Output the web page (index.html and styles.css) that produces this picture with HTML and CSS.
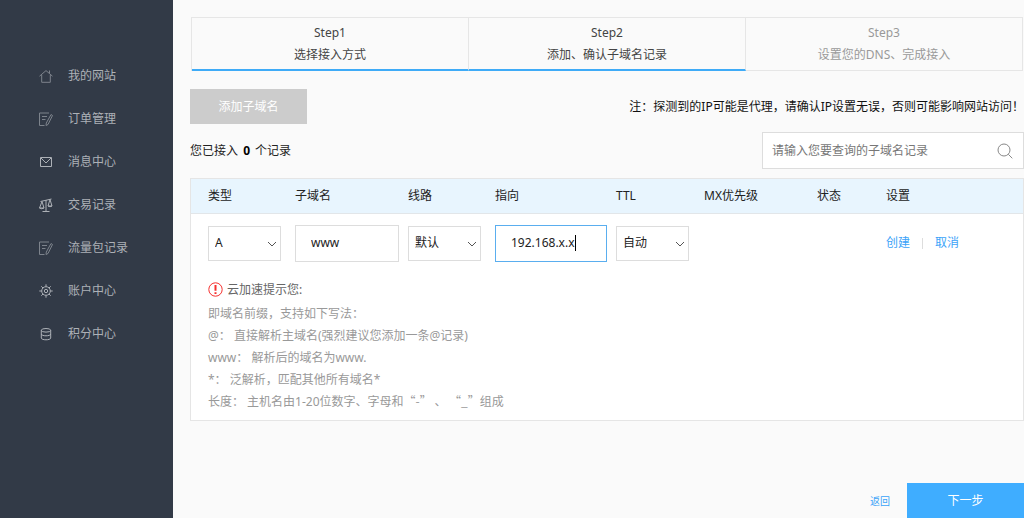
FILE: index.html
```html
<!DOCTYPE html>
<html lang="zh-CN">
<head>
<meta charset="utf-8">
<title>添加、确认子域名记录</title>
<link rel="stylesheet" href="styles.css">
</head>
<body>
<div class="app">
  <nav class="sidebar">
    <a class="nav-item" href="#"><svg class="nav-icon dim" viewBox="0 0 14 14"><path d="M.5 7.200 7 1.600l6.500 5.600M2.700 6v7.300h8.600V6M10.500 4V1.500"/></svg>我的网站</a>
    <a class="nav-item" href="#"><svg class="nav-icon dim" viewBox="0 0 14 14"><path d="M10 1H.5v12.500h5M3 4.500h5M3 7.500h3.500M12 2.500l1.500 1-4.500 9-2 1 .3-2.500z"/></svg>订单管理</a>
    <a class="nav-item" href="#"><svg class="nav-icon" viewBox="0 0 14 14"><path d="M1.500 2.500h11v9h-11zM2 3l5 5 5-5"/></svg>消息中心</a>
    <a class="nav-item" href="#"><svg class="nav-icon" viewBox="0 0 14 14"><path d="M1.500 3.500 12.500 1M7 2v11.500M3.500 13.500h7M3 3.500.5 10h4.500zM11 1.500 9 8h4zM.5 10q2.200 1.500 4.500 0M9 8q2 1.500 4 0"/></svg>交易记录</a>
    <a class="nav-item" href="#"><svg class="nav-icon dim" viewBox="0 0 14 14"><path d="M10 1H.5v12.500h5M3 4.500h5M3 7.500h3.500M12 2.500l1.500 1-4.500 9-2 1 .3-2.500z"/></svg>流量包记录</a>
    <a class="nav-item" href="#"><svg class="nav-icon" viewBox="0 0 14 14"><circle cx="7" cy="7" r="4.300"/><circle cx="7" cy="7" r="1.700"/><path d="M7 .3v2.400M7 11.300v2.400M.3 7h2.400M11.300 7h2.400M2.300 2.300 4 4M10 10l1.700 1.700M11.700 2.300 10 4M4 10l-1.700 1.700"/></svg>账户中心</a>
    <a class="nav-item" href="#"><svg class="nav-icon" viewBox="0 0 14 14"><ellipse cx="7" cy="3.300" rx="4.700" ry="1.800"/><path d="M2.300 3.300v7.700c0 2.400 9.400 2.400 9.400 0V3.300M2.300 7c0 2.400 9.400 2.400 9.400 0"/></svg>积分中心</a>
  </nav>

  <main class="main">
    <ol class="steps">
      <li class="step done"><span>Step1</span><span>选择接入方式</span></li>
      <li class="step done"><span>Step2</span><span>添加、确认子域名记录</span></li>
      <li class="step"><span>Step3</span><span>设置您的DNS、完成接入</span></li>
    </ol>

    <div class="bar">
      <button class="btn-add" type="button" disabled>添加子域名</button>
      <p class="note">注：探测到的IP可能是代理，请确认IP设置无误，否则可能影响网站访问！</p>
    </div>

    <div class="bar bar-search">
      <p class="count">您已接入 <b>0</b> 个记录</p>
      <form class="search">
        <input class="search-input" type="text" aria-label="查询子域名记录" placeholder="请输入您要查询的子域名记录">
        <button class="search-btn" type="button" aria-label="搜索"><svg viewBox="0 0 16 16"><circle cx="7" cy="7" r="6"/><path d="m11.300 11.300 4 4"/></svg></button>
      </form>
    </div>

    <section class="panel">
      <table class="records">
        <colgroup><col class="c-type"><col class="c-name"><col class="c-line"><col class="c-target"><col class="c-ttl"><col class="c-mx"><col class="c-state"><col></colgroup>
        <thead>
          <tr><th>类型</th><th>子域名</th><th>线路</th><th>指向</th><th>TTL</th><th>MX优先级</th><th>状态</th><th>设置</th></tr>
        </thead>
        <tbody>
          <tr>
            <td><div class="select"><select aria-label="类型"><option>A</option></select><svg viewBox="0 0 10 6"><path d="m1 1 4 4 4-4"/></svg></div></td>
            <td><div class="field"><input class="name-input" type="text" aria-label="子域名" value="www"></div></td>
            <td><div class="select"><select aria-label="线路"><option>默认</option></select><svg viewBox="0 0 10 6"><path d="m1 1 4 4 4-4"/></svg></div></td>
            <td><div class="field active"><input class="target-input" type="text" aria-label="指向" value="192.168.x.x"><i class="caret"></i></div></td>
            <td><div class="select"><select aria-label="TTL"><option>自动</option></select><svg viewBox="0 0 10 6"><path d="m1 1 4 4 4-4"/></svg></div></td>
            <td></td>
            <td></td>
            <td><div class="actions"><a href="#">创建</a><i class="divider"></i><a href="#">取消</a></div></td>
          </tr>
        </tbody>
      </table>
      <div class="tips">
        <p class="tips-title"><svg class="warn" viewBox="0 0 15 15"><circle cx="7.500" cy="7.500" r="6.700"/><path d="M7.500 3v5.800M7.500 10.200v1.800"/></svg>云加速提示您:</p>
        <p>即域名前缀，支持如下写法：</p>
        <p>@： 直接解析主域名(强烈建议您添加一条@记录)</p>
        <p>www： 解析后的域名为www.</p>
        <p>*： 泛解析，匹配其他所有域名*</p>
        <p>长度： 主机名由1-20位数字、字母和<span class="wide">“-” 、 “_”</span>组成</p>
      </div>
    </section>

    <footer class="footer">
      <a class="back" href="#">返回</a>
      <button class="btn-next" type="button">下一步</button>
    </footer>
  </main>
</div>
</body>
</html>
```
FILE: styles.css
```css
* { box-sizing: border-box; }

body {
  margin: 0;
  background: #fafafa;
  color: #222;
  font: 12px/22px "Noto Sans", "Noto Sans CJK SC", sans-serif;
}

p, ol { margin: 0; padding: 0; }
a { color: #3ba3f8; text-decoration: none; }
svg { fill: none; stroke: currentColor; }
button, input, select { font: inherit; color: inherit; }

.app { display: flex; min-height: 100vh; }

.sidebar {
  flex: 0 0 173px;
  padding-top: 54px;
  background: #323a47;
}

.nav-item {
  display: flex;
  align-items: center;
  gap: 15px;
  height: 43px;
  padding-left: 39px;
  color: #adb1b7;
}

.nav-icon { width: 14px; height: 14px; }
.nav-icon.dim { color: #7d838c; }

.main {
  flex: 1;
  min-width: 0;
  display: flex;
  flex-direction: column;
  padding: 17px 0 0 17px;
}

.steps {
  display: flex;
  margin: 0 1px;
  list-style: none;
  border-left: 1px solid #e6e6e6;
}

.step {
  flex: 1;
  display: flex;
  flex-direction: column;
  align-items: center;
  height: 54px;
  padding-top: 4px;
  border: 1px solid #e6e6e6;
  border-left: 0;
  color: #999;
}

.step.done { color: #444; border-bottom: 2px solid #3eabf7; }

.bar {
  display: flex;
  align-items: center;
  justify-content: space-between;
  margin-top: 18px;
}

.bar-search { margin-top: 8px; }

.btn-add {
  width: 117px;
  height: 35px;
  padding: 0;
  border: 0;
  background: #ccc;
  color: #fff;
}

.note { color: #111; }
.count b { margin: 0 2px; color: #000; }

.search {
  display: flex;
  width: 262px;
  height: 37px;
  border: 1px solid #ddd;
  background: #fff;
}

.search-input {
  flex: 1;
  min-width: 0;
  padding: 0 0 0 9px;
  border: 0;
  outline: 0;
  background: none;
}

.search-input::placeholder { color: #777; opacity: 1; }

.search-btn {
  display: flex;
  align-items: center;
  padding: 0 10px;
  border: 0;
  background: none;
  color: #888;
}

.search-btn svg { width: 16px; height: 16px; }

.panel {
  margin-top: 9px;
  border: 1px solid #e5e5e5;
  background: #fff;
}

.records {
  width: 100%;
  table-layout: fixed;
  border-collapse: collapse;
}

.c-type { width: 104px; }
.c-name { width: 113px; }
.c-line { width: 87px; }
.c-target { width: 121px; }
.c-ttl { width: 88px; }
.c-mx { width: 113px; }
.c-state { width: 69px; }

.records th {
  height: 34px;
  padding: 0;
  border-bottom: 1px solid #e2e6e9;
  background: #e8f5fe;
  font-weight: normal;
  text-align: left;
}

.records td { padding: 11px 0 0; }
.records th:first-child, .records td:first-child { padding-left: 17px; }

.select {
  position: relative;
  width: 73px;
  height: 35px;
}

.select select {
  appearance: none;
  width: 100%;
  height: 100%;
  padding: 0 20px 0 6px;
  border: 1px solid #ddd;
  border-radius: 0;
  background: #fff;
}

.select svg {
  position: absolute;
  top: 15px;
  right: 4px;
  width: 10px;
  height: 6px;
  color: #555;
  pointer-events: none;
}

.field {
  display: flex;
  align-items: center;
  width: 104px;
  height: 37px;
  padding-left: 15px;
  border: 1px solid #ddd;
  background: #fff;
}

.field.active { width: 112px; border-color: #5aaeef; }

.field input {
  min-width: 0;
  padding: 0;
  border: 0;
  outline: 0;
  background: none;
}

.name-input { width: 100%; }
.target-input { field-sizing: content; }
.caret { width: 1px; height: 16px; background: #000; }

.actions { display: flex; align-items: center; }
.divider { width: 1px; height: 11px; margin: 0 12px; background: #ddd; }

.tips { padding: 17px 17px 7px; color: #999; }

.tips-title {
  display: flex;
  align-items: center;
  gap: 4px;
  margin-bottom: 2px;
  color: #666;
}

.warn { width: 15px; height: 15px; color: #f5302e; }
.warn path { stroke-width: 2; }
.wide { font-family: "Noto Sans CJK SC", sans-serif; line-height: 1; }

.footer {
  display: flex;
  align-items: center;
  justify-content: flex-end;
  gap: 17px;
  margin-top: auto;
}

.back { font-size: 10px; }

.btn-next {
  width: 117px;
  height: 35px;
  padding: 0;
  border: 0;
  background: #3fadff;
  color: #fff;
}
```
